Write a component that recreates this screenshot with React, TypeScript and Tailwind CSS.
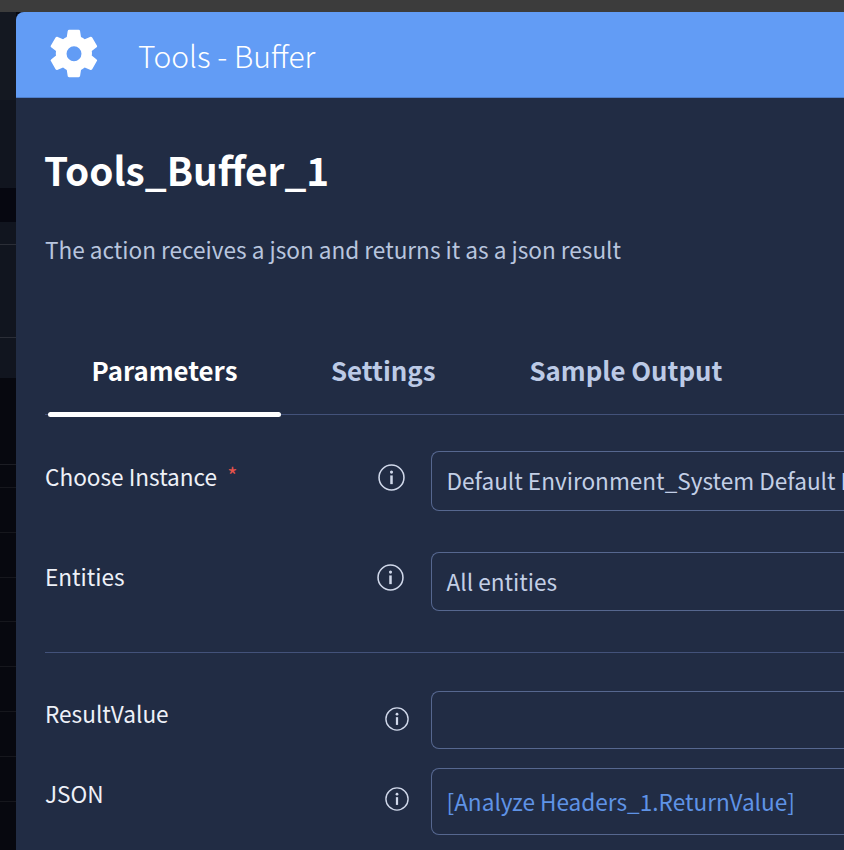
import React from "react";

const FONT = "font-['Noto_Sans_CJK_SC','Noto_Sans',sans-serif]";

function Gear() {
  return (
    <svg width="56" height="56" viewBox="0 0 24 24" fill="#ffffff" className="shrink-0">
      <path
        fillRule="evenodd"
        d="M9.9 1.2c-.3 0-.5.2-.6.5L8.9 4.3c-.6.2-1.1.6-1.6.9L4.8 4.2c-.2-.1-.5 0-.7.3l-2 3.4c-.2.3-.1.6.1.8l2.1 1.6c0 .3-.1.6-.1 1 0 .3 0 .6.1.9l-2.1 1.7c-.2.2-.3.5-.1.7l2 3.5c.2.3.5.4.7.3l2.5-1c.5.4 1 .7 1.6 1l.4 2.6c0 .3.3.5.6.5h4.1c.3 0 .5-.2.6-.5l.4-2.6c.6-.3 1.1-.6 1.6-1l2.5 1c.2.1.5 0 .7-.3l2-3.5c.2-.2.1-.5-.1-.7l-2.1-1.7c.1-.3.1-.6.1-.9 0-.4 0-.7-.1-1l2.1-1.6c.2-.2.3-.5.1-.8l-2-3.4c-.2-.3-.5-.4-.7-.3l-2.5 1c-.5-.3-1-.7-1.6-.9l-.4-2.6c-.1-.3-.3-.5-.6-.5H9.9zM12 8.3a3.2 3.2 0 1 1 0 6.4 3.2 3.2 0 0 1 0-6.4z"
      />
    </svg>
  );
}

function Info({ size }: { size: number }) {
  return (
    <svg width={size} height={size} viewBox="0 0 26 26" fill="none" className="shrink-0">
      <circle cx="13" cy="13" r="12" stroke="#d0d8ea" strokeWidth="1.5" />
      <circle cx="13" cy="7.8" r="1.5" fill="#d0d8ea" />
      <rect x="11.8" y="11" width="2.4" height="8.4" fill="#d0d8ea" />
    </svg>
  );
}

function Row({
  label,
  required,
  value,
  valueClass,
  iconSize,
  iconClass,
  labelClass,
  fieldClass,
  rowClass,
}: {
  label: string;
  required?: boolean;
  value?: string;
  valueClass?: string;
  iconSize: number;
  iconClass: string;
  labelClass: string;
  fieldClass: string;
  rowClass: string;
}) {
  return (
    <div className={`flex items-start ${rowClass}`}>
      <div className={`w-[332px] shrink-0 flex text-[22.6px] leading-[30px] text-[#eef1f8] ${labelClass}`}>
        <span>{label}</span>
        {required && <span className="ml-[10px] text-[22px] leading-[24px] text-[#e5534b]">*</span>}
      </div>
      <div className={`w-[54px] shrink-0 flex ${iconClass}`}>
        <Info size={iconSize} />
      </div>
      <div className={`flex-1 min-w-0 flex items-center border border-r-0 border-[#56678f] rounded-l-lg ${fieldClass}`}>
        <span className={`pl-[14.5px] text-[22.6px] whitespace-nowrap ${valueClass ?? "text-[#c3cfe6]"}`}>{value}</span>
      </div>
    </div>
  );
}

const stripRows = [
  { h: "h-[88px]", c: "bg-[#141821]" },
  { h: "h-[88px]", c: "bg-[#11151f]" },
  { h: "h-[34px]", c: "bg-[#060710]" },
  { h: "h-[23px]", c: "bg-[#11151f] border-b border-[#2b2e37]" },
  { h: "h-[93px]", c: "bg-[#11151f] border-b border-[#2b2e37]" },
  { h: "h-[40px]", c: "bg-[#11151f]" },
  { h: "h-[87px]", c: "bg-[#07080f] border-b border-[#1c1d24]" },
  { h: "h-[23px]", c: "bg-[#07080f] border-b border-[#16171d]" },
  { h: "h-[45px]", c: "bg-[#07080f] border-b border-[#16171d]" },
  { h: "h-[45px]", c: "bg-[#07080f] border-b border-[#16171d]" },
  { h: "h-[44px]", c: "bg-[#07080f] border-b border-[#16171d]" },
  { h: "h-[45px]", c: "bg-[#07080f] border-b border-[#16171d]" },
  { h: "h-[45px]", c: "bg-[#07080f] border-b border-[#16171d]" },
  { h: "h-[45px]", c: "bg-[#07080f] border-b border-[#16171d]" },
  { h: "h-[45px]", c: "bg-[#07080f] border-b border-[#16171d]" },
];

export default function App() {
  return (
    <div className={`w-[844px] h-[850px] overflow-hidden flex flex-col bg-[#07080f] ${FONT}`}>
      <div className="h-3 shrink-0 bg-[#3c3c3c]" />
      <div className="flex flex-1 min-h-0">
        <div className="w-4 shrink-0 flex flex-col">
          {stripRows.map((r, i) => (
            <div key={i} className={`shrink-0 ${r.h} ${r.c}`} />
          ))}
        </div>
        <div className="w-[828px] shrink-0 rounded-tl-lg overflow-hidden bg-[#212c44] flex flex-col">
          <div className="h-[86px] shrink-0 bg-[#629cf5] border-b border-[#4f7fcb] flex items-center pl-[30px]">
            <Gear />
            <div className="ml-[36px] text-[30px] leading-none text-white font-light">Tools - Buffer</div>
          </div>
          <div className="pl-[29px] flex flex-col">
            <h1 className="mt-[46px] -ml-px text-[38.7px] leading-[50px] font-bold text-white whitespace-nowrap">Tools_Buffer_1</h1>
            <p className="mt-[40px] text-[22.6px] leading-[32px] text-[#b8c5de] whitespace-nowrap">
              The action receives a json and returns it as a json result
            </p>
            <div className="mt-[84px] h-[65px] border-b border-[#43527a] flex text-[25.8px] leading-[40px] font-bold">
              <div className="relative w-[236px] flex justify-center text-white">
                <span className="pl-[3px]">Parameters</span>
                <span className="absolute left-[3px] right-0 top-[62px] h-[5px] rounded-full bg-white" />
              </div>
              <div className="ml-[50px] text-[#bccae6]">Settings</div>
              <div className="ml-[94px] text-[#bccae6] whitespace-nowrap">Sample Output</div>
            </div>
            <Row
              label="Choose Instance"
              required
              value="Default Environment_System Default Instance"
              rowClass="mt-9"
              labelClass="mt-[11px]"
              iconSize={27}
              iconClass="mt-[13px] pl-[1px]"
              fieldClass="h-[60px]"
            />
            <Row
              label="Entities"
              value="All entities"
              rowClass="mt-[41px]"
              labelClass="mt-[10px]"
              iconSize={27}
              iconClass="mt-[12px]"
              fieldClass="h-[59px]"
            />
            <div className="mt-[41px] h-px bg-[#43527a]" />
            <Row
              label="ResultValue"
              rowClass="mt-[38px]"
              labelClass="mt-[8px]"
              iconSize={24}
              iconClass="mt-[16px] pl-[8px]"
              fieldClass="h-[58px]"
            />
            <Row
              label="JSON"
              value="[Analyze Headers_1.ReturnValue]"
              valueClass="text-[#5f93e6]"
              rowClass="mt-[19px]"
              labelClass="mt-[11px]"
              iconSize={24}
              iconClass="mt-[19px] pl-[8px]"
              fieldClass="h-[67px]"
            />
          </div>
        </div>
      </div>
    </div>
  );
}
